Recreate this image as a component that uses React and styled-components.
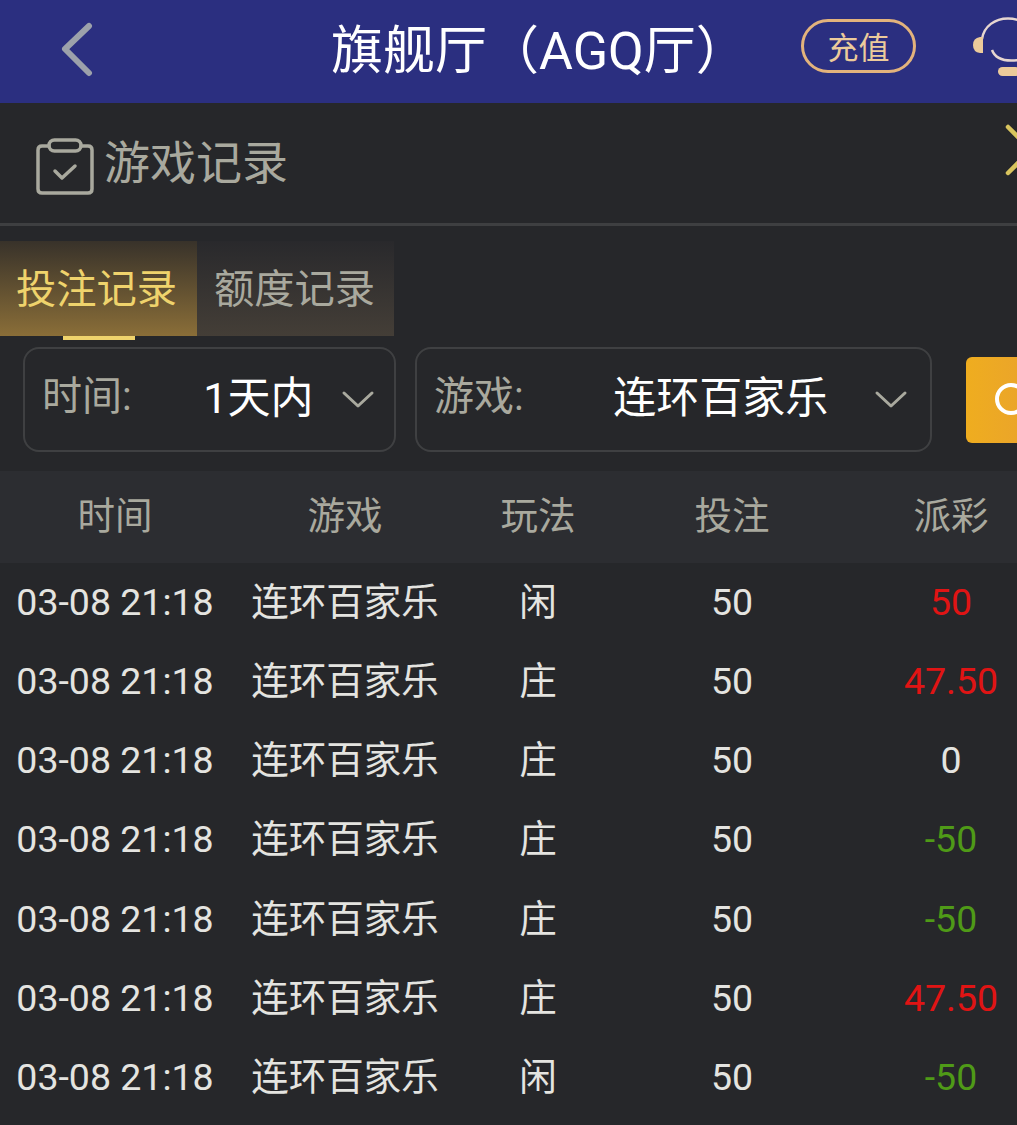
import React from 'react';
import styled, { createGlobalStyle } from 'styled-components';

const GlobalStyle = createGlobalStyle`
  html, body { margin: 0; padding: 0; background: #26272a; overflow: hidden; }
  body { font-family: Roboto, "Noto Sans CJK SC", sans-serif; }
`;

const Viewport = styled.div`
  width: 1017px;
  height: 1125px;
  overflow: hidden;
`;

const Screen = styled.div`
  width: 1054px;
  background: #26272a;
  color: #e4e4e0;
`;

const TopBar = styled.header`
  height: 103px;
  background: #2b2f80;
  display: flex;
  align-items: center;
  padding-left: 58px;
  box-sizing: border-box;
`;

const BackIcon = styled.svg`
  flex: none;
  margin-top: -2px;
`;

const BarTitle = styled.h1`
  margin: 0 0 0 235px;
  width: 419px;
  flex: none;
  font-size: 52px;
  font-weight: 400;
  line-height: 1;
  color: #fff;
  white-space: nowrap;
`;

const TopUp = styled.div`
  margin-left: 51px;
  width: 115px;
  height: 54px;
  margin-top: -12px;
  flex: none;
  box-sizing: border-box;
  border: 3px solid #e3b37c;
  border-radius: 27px;
  display: flex;
  align-items: center;
  justify-content: center;
  font-size: 31px;
  color: #eccb9b;
`;

const Support = styled.svg`
  margin-left: 57px;
  margin-top: -9px;
  flex: none;
`;

const TitleRow = styled.div`
  height: 120px;
  display: flex;
  align-items: center;
  padding-left: 36px;
  border-bottom: 3px solid #3e3f41;
  font-size: 46px;
  color: #a9a99e;
  gap: 10px;
`;

const ClipboardIcon = styled.svg`
  flex: none;
  margin-top: 6px;
`;

const TitleLabel = styled.span`
  flex: 1;
  line-height: 1;
`;

const CloseIcon = styled.svg`
  flex: none;
  margin-top: -26px;
  margin-right: -3px;
`;

const Tabs = styled.div`
  display: flex;
  margin-top: 15px;
`;

const Tab = styled.div`
  width: 197px;
  height: 95px;
  box-sizing: border-box;
  padding: 0 ${p => (p.$active ? 4 : 2)}px 6px 0;
  display: flex;
  align-items: center;
  justify-content: center;
  font-size: 40.3px;
  position: relative;
  color: ${p => (p.$active ? '#efd36c' : '#a9a99e')};
  background: ${p => (p.$active
    ? 'linear-gradient(180deg, #38322a 0%, #8a6e38 100%)'
    : 'linear-gradient(180deg, #29292c 0%, #443e37 100%)')};

  &::after {
    content: '';
    display: ${p => (p.$active ? 'block' : 'none')};
    position: absolute;
    left: 63px;
    bottom: -4px;
    width: 72px;
    height: 4px;
    background: #efd36c;
  }
`;

const Filters = styled.div`
  display: flex;
  align-items: center;
  gap: 19px;
  padding: 11px 0 19px 23px;
`;

const Select = styled.div`
  width: ${p => p.$width}px;
  height: 105px;
  box-sizing: border-box;
  border: 2px solid #3f4042;
  border-radius: 16px;
  display: flex;
  align-items: center;
  padding: 0 ${p => p.$trail}px 10px 17px;
`;

const SelectLabel = styled.span`
  font-size: 40px;
  color: #a9a99e;
  flex: none;
  margin-top: -4px;
`;

const SelectValue = styled.span`
  flex: 1;
  text-align: center;
  padding-left: 44px;
  font-size: 43px;
  color: #fff;
  margin-top: -2px;
`;

const ChevronIcon = styled.svg`
  flex: none;
  margin-top: 10px;
`;

const SearchButton = styled.div`
  margin-left: 15px;
  width: 88px;
  height: 86px;
  padding-left: 4px;
  box-sizing: border-box;
  border-radius: 6px;
  background: linear-gradient(90deg, #efad1f, #e8a030);
  display: flex;
  align-items: center;
  justify-content: center;
`;

const Row = styled.div`
  display: grid;
  grid-template-columns: 230px 230px 156px 232px 206px;
  justify-items: center;
  align-items: center;
  height: ${p => (p.$head ? '92px' : '79.2px')};
  font-size: 37.5px;
  line-height: 1;
  background: ${p => (p.$head ? '#2c2d31' : 'transparent')};
  color: ${p => (p.$head ? '#a9a99e' : '#e4e4e0')};
`;

const Cell = styled.span`
  white-space: nowrap;
  color: ${p => (p.$tone === 'win' ? '#e01414' : p.$tone === 'lose' ? '#4f9a17' : 'inherit')};
`;

const records = [
  ['闲', '50', 'win'],
  ['庄', '47.50', 'win'],
  ['庄', '0', ''],
  ['庄', '-50', 'lose'],
  ['庄', '-50', 'lose'],
  ['庄', '47.50', 'win'],
  ['闲', '-50', 'lose'],
];

const Chevron = () => (
  <ChevronIcon width="34" height="20" viewBox="0 0 34 20" fill="none" stroke="#a9a99e" strokeWidth="3" strokeLinecap="round" strokeLinejoin="round">
    <path d="M3 3 L17 16 L31 3" />
  </ChevronIcon>
);

export default function App() {
  return (
    <Viewport>
      <GlobalStyle />
      <Screen>
        <TopBar>
          <BackIcon width="38" height="58" viewBox="0 0 38 58" fill="none" stroke="#9ca1ab" strokeWidth="6" strokeLinecap="round" strokeLinejoin="round">
            <path d="M31 4 L7 27 L31 51" />
          </BackIcon>
          <BarTitle>旗舰厅（AGQ厅）</BarTitle>
          <TopUp>充值</TopUp>
          <Support width="70" height="60" viewBox="0 0 70 60" fill="none">
            <path d="M9 22 C11 9 22 1.5 35 1.5 C48 1.5 59 9 61 22" stroke="#e6d6d0" strokeWidth="2.5" />
            <path d="M19 33 C22 41 31 45 46 43" stroke="#e6d6d0" strokeWidth="2.5" />
            <path d="M10 20 V36 H7 Q0 35 0 28 Q0 21 7 20 Z" fill="#eccb9b" />
            <rect x="25" y="50" width="22" height="9" rx="4.5" fill="#eccb9b" />
          </Support>
        </TopBar>

        <TitleRow>
          <ClipboardIcon width="58" height="57" viewBox="0 0 58 57" fill="none" stroke="#a9a99e" strokeWidth="3.5" strokeLinejoin="round" strokeLinecap="round">
            <path d="M13 8 H6 Q2 8 2 12 V51 Q2 55 6 55 H52 Q56 55 56 51 V12 Q56 8 52 8 H45" />
            <rect x="13" y="2" width="32" height="11" rx="5.5" />
            <path d="M19 33 L26 40 L39 28" />
          </ClipboardIcon>
          <TitleLabel>游戏记录</TitleLabel>
          <CloseIcon width="52" height="52" viewBox="0 0 52 52" fill="none" stroke="#d8c45e" strokeWidth="4.5" strokeLinecap="round">
            <path d="M3 3 L49 49 M49 3 L3 49" />
          </CloseIcon>
        </TitleRow>

        <Tabs>
          <Tab $active>投注记录</Tab>
          <Tab>额度记录</Tab>
        </Tabs>

        <Filters>
          <Select $width={373} $trail={19}>
            <SelectLabel>时间:</SelectLabel>
            <SelectValue>1天内</SelectValue>
            <Chevron />
          </Select>
          <Select $width={517} $trail={22}>
            <SelectLabel>游戏:</SelectLabel>
            <SelectValue>连环百家乐</SelectValue>
            <Chevron />
          </Select>
          <SearchButton>
            <svg width="46" height="46" viewBox="0 0 46 46" fill="none" stroke="#fff" strokeWidth="4" strokeLinecap="round">
              <circle cx="22" cy="22" r="14" />
              <path d="M33 33 L42 42" />
            </svg>
          </SearchButton>
        </Filters>

        <Row $head>
          <Cell>时间</Cell>
          <Cell>游戏</Cell>
          <Cell>玩法</Cell>
          <Cell>投注</Cell>
          <Cell>派彩</Cell>
        </Row>
        {records.map((r, i) => (
          <Row key={i}>
            <Cell>03-08 21:18</Cell>
            <Cell>连环百家乐</Cell>
            <Cell>{r[0]}</Cell>
            <Cell>50</Cell>
            <Cell $tone={r[2]}>{r[1]}</Cell>
          </Row>
        ))}
      </Screen>
    </Viewport>
  );
}
